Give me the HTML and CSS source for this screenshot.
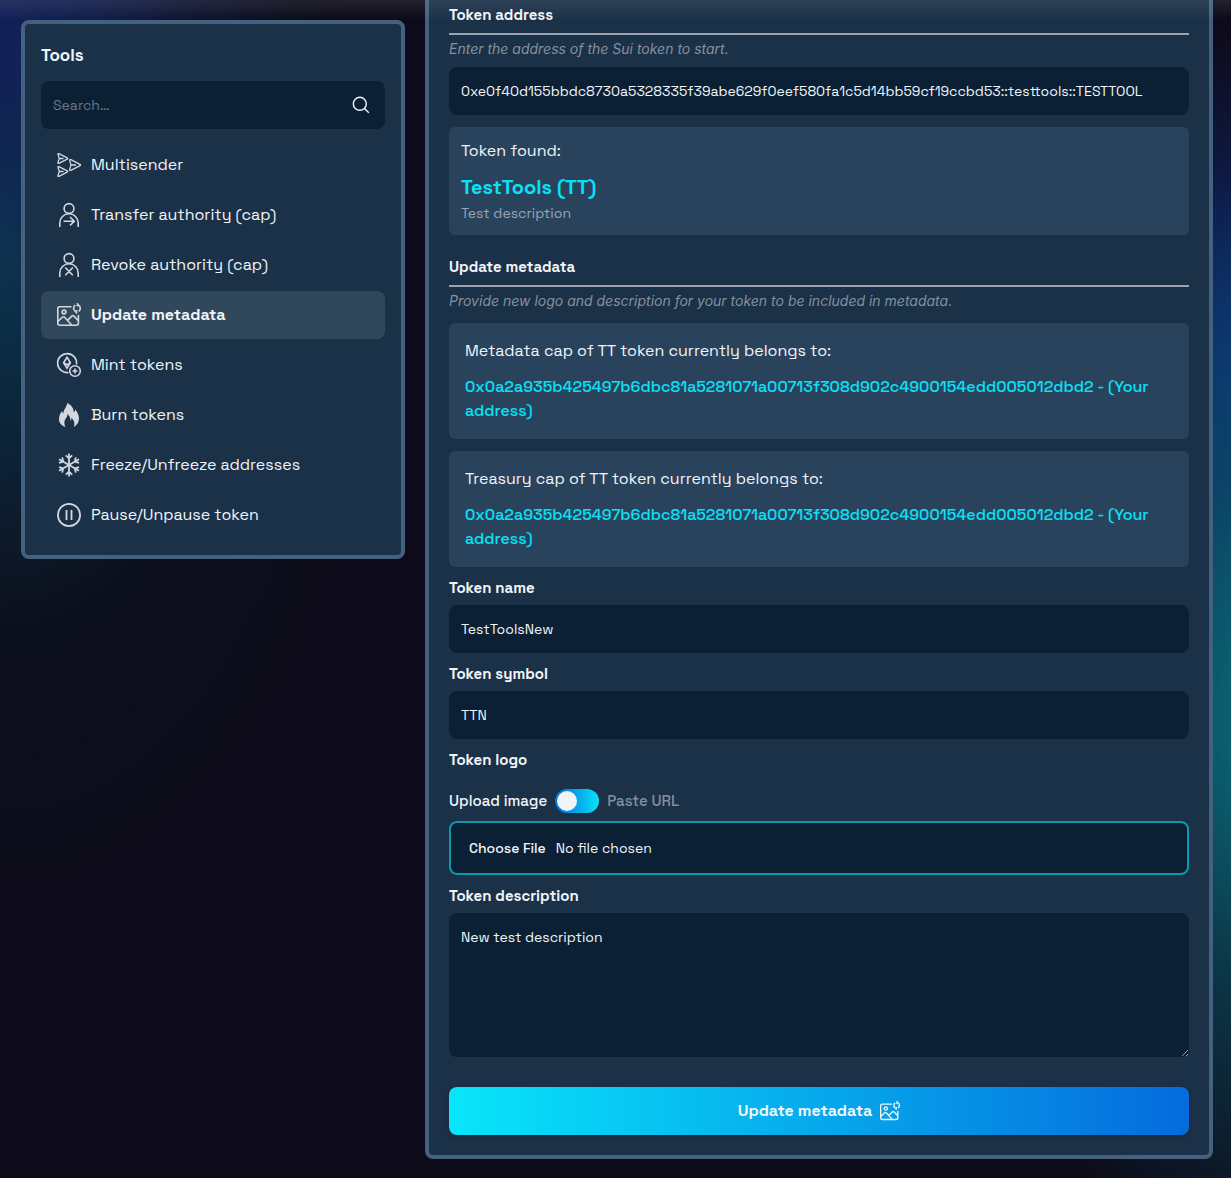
FILE: index.html
```html
<!DOCTYPE html>
<html lang="en">
<head>
    <meta charset="UTF-8">
    <meta name="viewport" content="width=device-width, initial-scale=1.0">
    <title>Update metadata</title>
    <link rel="stylesheet" href="styles.css">
</head>
<body>
    <svg class="sprite" aria-hidden="true">
        <symbol id="icon-metadata" viewBox="0 0 24 24">
            <path d="M14.500 3.800H2.600A1.800 1.800 0 0 0 .8 5.600V20.400a1.800 1.800 0 0 0 1.800 1.800H19.600a1.800 1.800 0 0 0 1.800-1.800V12"/>
            <circle cx="7" cy="9" r="1.900"/>
            <path d="M.8 18.500l4.700-4.300a1.500 1.500 0 0 1 2 0l7 7.500M10.500 17.400l4.300-4.300a1.500 1.500 0 0 1 2.100 0l4.500 4.500"/>
            <path d="M18.200 2.200a3.700 3.700 0 0 0-.1 6M21.700 8.400a3.700 3.700 0 0 0 .1-6M19.900.2l1.400 1.700-1.700 1.300M20.100 10.400l-1.400-1.700 1.700-1.300"/>
        </symbol>
    </svg>

    <div class="container">
        <aside class="sidebar">
            <h2 class="sidebar-title">Tools</h2>
            <div class="search">
                <input type="search" placeholder="Search…" aria-label="Search tools">
                <svg class="search-icon" viewBox="0 0 18 18"><circle cx="7.800" cy="7.800" r="6.500"/><path d="M12.500 12.500l4.300 4.300"/></svg>
            </div>
            <nav class="menu">
                <a href="#">
                    <svg class="icon thin" viewBox="0 0 24 24">
                        <path d="M1 1.500Q.6.200 1.900.700L10.200 4.800Q11.300 5.500 10.200 6.100L1.900 10.300Q.6 10.800 1 9.500L2.300 5.500ZM2.300 5.500H6.500"/>
                        <path d="M12.700 7.700Q12.300 6.100 13.800 6.700L23 11.300Q24 12 23 12.700L13.800 17.300Q12.300 17.900 12.700 16.300L14 12ZM14 12H19"/>
                        <path d="M1 14.500Q.6 13.200 1.900 13.700L10.200 17.900Q11.300 18.500 10.200 19.200L1.900 23.300Q.6 23.800 1 22.500L2.300 18.500ZM2.300 18.500H6.500"/>
                    </svg>
                    Multisender
                </a>
                <a href="#">
                    <svg class="icon" viewBox="0 0 24 24">
                        <circle cx="12" cy="5.500" r="4.900"/>
                        <path d="M2.800 24V20a9.200 9.200 0 0 1 18.400 0v4M6.500 18.200H17M13 14l4.300 4.200L13 22.400"/>
                    </svg>
                    Transfer authority (cap)
                </a>
                <a href="#">
                    <svg class="icon" viewBox="0 0 24 24">
                        <circle cx="12" cy="5.500" r="4.900"/>
                        <path d="M2.800 24V20a9.200 9.200 0 0 1 18.400 0v4M8.300 14.500l7.500 7.800M15.800 14.500l-7.500 7.800"/>
                    </svg>
                    Revoke authority (cap)
                </a>
                <a href="#" class="active">
                    <svg class="icon"><use href="#icon-metadata"/></svg>
                    Update metadata
                </a>
                <a href="#">
                    <svg class="icon" viewBox="0 0 24 24">
                        <path d="M11.500 19.500A9.500 9.500 0 1 1 19.500 11.500"/>
                        <path d="M10 4.300l3.400 5.400L10 15.300 6.600 9.700ZM6.600 9.700l3.400 2 3.400-2"/>
                        <circle cx="18" cy="18" r="5.300"/>
                        <path d="M18 15.500v5M15.500 18h5"/>
                    </svg>
                    Mint tokens
                </a>
                <a href="#">
                    <svg class="icon filled" viewBox="0 0 24 24">
                        <path d="M10.300 0C15 2.300 16.800 5.700 16.700 9.300c.9-.7 1.500-1.700 1.700-2.900 2.200 2.700 3.700 6 3.600 9.400-.1 3.600-2 6.600-5.200 8.200 1.300-3.300.6-6.400-2.300-9.300.1 1.300-.3 2.400-1.100 3.100C13.500 15 12.600 12.700 10.500 11c.3 3.100-2.500 4.600-3 7.600-.4 2 .1 3.900 1 5.400C4.600 23 2 19.800 2 16c0-3.200 1.300-5.800 3.200-8 .1 1.100.5 2 1.200 2.600C6.400 6.500 9.900 4.200 10.300 0z"/>
                    </svg>
                    Burn tokens
                </a>
                <a href="#">
                    <svg class="icon bold" viewBox="0 0 24 24">
                        <path id="flake-arm" d="M12 12V.5M8.800 2.300L12 5.300l3.200-3"/>
                        <use href="#flake-arm" transform="rotate(60 12 12)"/>
                        <use href="#flake-arm" transform="rotate(120 12 12)"/>
                        <use href="#flake-arm" transform="rotate(180 12 12)"/>
                        <use href="#flake-arm" transform="rotate(240 12 12)"/>
                        <use href="#flake-arm" transform="rotate(300 12 12)"/>
                    </svg>
                    Freeze/Unfreeze addresses
                </a>
                <a href="#">
                    <svg class="icon bold" viewBox="0 0 24 24">
                        <circle cx="12" cy="12" r="11.100"/>
                        <path d="M9.500 7v10M14.500 7v10"/>
                    </svg>
                    Pause/Unpause token
                </a>
            </nav>
        </aside>

        <main class="panel">
            <form action="#" method="post">
                <h3 class="section-title"><label for="address">Token address</label></h3>
                <p class="hint">Enter the address of the Sui token to start.</p>
                <input type="text" class="field" id="address" value="0xe0f40d155bbdc8730a5328335f39abe629f0eef580fa1c5d14bb59cf19ccbd53::testtools::TESTTOOL">

                <div class="found">
                    <p>Token found:</p>
                    <p class="found-name">TestTools (TT)</p>
                    <p class="found-text">Test description</p>
                </div>

                <h3 class="section-title">Update metadata</h3>
                <p class="hint">Provide new logo and description for your token to be included in metadata.</p>

                <div class="owner">
                    <p>Metadata cap of TT token currently belongs to:</p>
                    <p class="owner-address">0x0a2a935b425497b6dbc81a5281071a00713f308d902c4900154edd005012dbd2 - (Your address)</p>
                </div>
                <div class="owner">
                    <p>Treasury cap of TT token currently belongs to:</p>
                    <p class="owner-address">0x0a2a935b425497b6dbc81a5281071a00713f308d902c4900154edd005012dbd2 - (Your address)</p>
                </div>

                <label class="field-label" for="name">Token name</label>
                <input type="text" class="field" id="name" value="TestToolsNew">

                <label class="field-label" for="symbol">Token symbol</label>
                <input type="text" class="field" id="symbol" value="TTN">

                <label class="field-label" for="logo">Token logo</label>
                <div class="switch-row">
                    <label for="logo-source">Upload image</label>
                    <input type="checkbox" class="switch" id="logo-source">
                    <label class="muted" for="logo-source">Paste URL</label>
                </div>
                <input type="file" class="file" id="logo">

                <label class="field-label" for="description">Token description</label>
                <textarea class="field" id="description">New test description</textarea>

                <button type="submit" class="submit">
                    Update metadata
                    <svg class="icon"><use href="#icon-metadata"/></svg>
                </button>
            </form>
        </main>
    </div>
</body>
</html>
```

FILE: styles.css
```css
* {
    box-sizing: border-box;
}
body {
    margin: 0;
    min-height: 100vh;
    color: #f1f5f9;
    font-family: "Space Grotesk", Inter, sans-serif;
    font-size: 16px;
    line-height: 24px;
    background:
        radial-gradient(ellipse 300px 240px at 0 40px, rgba(20, 32, 100, 0.8), transparent),
        radial-gradient(ellipse 240px 380px at 0 250px, #0c3450, transparent),
        radial-gradient(ellipse 400px 680px at 0 250px, rgba(10, 28, 40, 0.6), transparent),
        radial-gradient(ellipse 420px 560px at 108% 720px, #0a8494, rgba(10, 100, 120, 0.5) 50%, transparent),
        radial-gradient(ellipse 300px 340px at 105% 360px, #0d2e80, transparent),
        #0d0b19;
}
body::before {
    content: "";
    position: fixed;
    top: 0;
    left: 0;
    right: 0;
    height: 20px;
    background: linear-gradient(rgba(255, 255, 255, 0.09), transparent);
    pointer-events: none;
    z-index: 1;
}
h2, h3, p {
    margin: 0;
}
input, textarea, button {
    font: inherit;
    color: inherit;
}
.sprite {
    display: none;
}
.container {
    display: flex;
    align-items: flex-start;
    gap: 20px;
    padding: 0 18px 19px 21px;
}

/* Sidebar */
.sidebar {
    flex: 0 0 384px;
    position: sticky;
    top: 20px;
    margin-top: 20px;
    padding: 16px;
    background-color: #1b3148;
    border: 4px solid #446280;
    border-radius: 8px;
}
.sidebar-title {
    margin-bottom: 11px;
    font-size: 17px;
    line-height: 30px;
}
.search {
    display: flex;
    align-items: center;
    height: 48px;
    padding: 0 15px 0 12px;
    margin-bottom: 12px;
    background-color: #0b2034;
    border-radius: 8px;
}
.search input {
    flex: 1;
    min-width: 0;
    padding: 0;
    background: none;
    border: none;
    outline: none;
    font-size: 14px;
}
.search input::placeholder {
    color: #6b7785;
}
.search-icon {
    width: 18px;
    height: 18px;
    fill: none;
    stroke: #f1f5f9;
    stroke-width: 1.4;
}
.menu {
    display: flex;
    flex-direction: column;
    gap: 2px;
}
.menu a {
    display: flex;
    align-items: center;
    gap: 10px;
    height: 48px;
    padding: 0 16px;
    border-radius: 8px;
    color: #f1f5f9;
    text-decoration: none;
}
.menu a.active {
    background-color: #31475b;
    font-weight: bold;
}
.icon {
    flex: none;
    width: 24px;
    height: 24px;
    fill: none;
    stroke: #d3d7e0;
    stroke-width: 1.6;
    overflow: visible;
}
.icon.thin {
    stroke-width: 1.3;
}
.icon.bold {
    stroke-width: 1.8;
}
.icon.filled {
    fill: #d3d7e0;
    stroke: none;
}

/* Main panel */
.panel {
    flex: 1;
    min-width: 0;
    padding: 3px 20px 20px;
    background-color: #1b3148;
    border: 4px solid #446280;
    border-top: none;
    border-radius: 0 0 8px 8px;
}
.section-title {
    padding-bottom: 6px;
    border-bottom: 2px solid #9ca3af;
    font-size: 15px;
    line-height: 24px;
}
.hint {
    margin: 4px 0 8px;
    color: #84909e;
    font-family: Inter, sans-serif;
    font-size: 14px;
    font-style: italic;
    line-height: 20px;
}
.field {
    display: block;
    width: 100%;
    height: 48px;
    padding: 0 12px;
    background-color: #0b2034;
    border: none;
    border-radius: 8px;
    font-size: 14px;
}
.found {
    margin: 12px 0 20px;
    padding: 12px;
    background-color: #29435d;
    border-radius: 6px;
}
.found-name {
    margin: 10px 0 2px;
    color: #08e2f8;
    font-size: 20px;
    font-weight: 600;
    line-height: 28px;
}
.found-text {
    color: #9ca3af;
    font-size: 14px;
    line-height: 20px;
}
.owner {
    margin-top: 12px;
    padding: 16px;
    background-color: #29435d;
    border-radius: 6px;
}
.owner-address {
    margin-top: 12px;
    color: #08e2f8;
    font-weight: 500;
}
.field-label {
    display: block;
    margin: 9px 0 5px;
    font-size: 15px;
    font-weight: 600;
}
.switch-row {
    display: flex;
    align-items: center;
    gap: 8px;
    margin: 17px 0 8px;
    font-size: 15px;
    font-weight: 500;
}
.muted {
    color: #84909e;
}
.switch {
    appearance: none;
    display: flex;
    width: 44px;
    height: 24px;
    margin: 0;
    padding: 2px;
    border-radius: 12px;
    background: linear-gradient(90deg, #056bdd, #08e2f8);
    cursor: pointer;
}
.switch::before {
    content: "";
    width: 20px;
    height: 20px;
    border-radius: 50%;
    background-color: #f1f5f9;
}
.switch:checked {
    justify-content: flex-end;
}
.file {
    display: block;
    width: 100%;
    height: 54px;
    padding: 13px 18px;
    background-color: #0b2034;
    border: 2px solid #0d97ac;
    border-radius: 8px;
    font-size: 14px;
}
.file::file-selector-button {
    margin: 0 10px 0 0;
    padding: 0;
    background: none;
    border: none;
    color: #f1f5f9;
    font: inherit;
    font-weight: 500;
}
textarea.field {
    height: 144px;
    padding: 12px;
    resize: vertical;
}
.submit {
    display: flex;
    align-items: center;
    justify-content: center;
    gap: 8px;
    width: 100%;
    height: 48px;
    margin-top: 30px;
    background: linear-gradient(90deg, #08e6fa, #056bdd);
    border: none;
    border-radius: 8px;
    box-shadow: 0 2px 6px rgba(0, 0, 0, 0.15);
    font-weight: bold;
    cursor: pointer;
}
.submit .icon {
    width: 20px;
    height: 20px;
    stroke: #f1f5f9;
}
```
